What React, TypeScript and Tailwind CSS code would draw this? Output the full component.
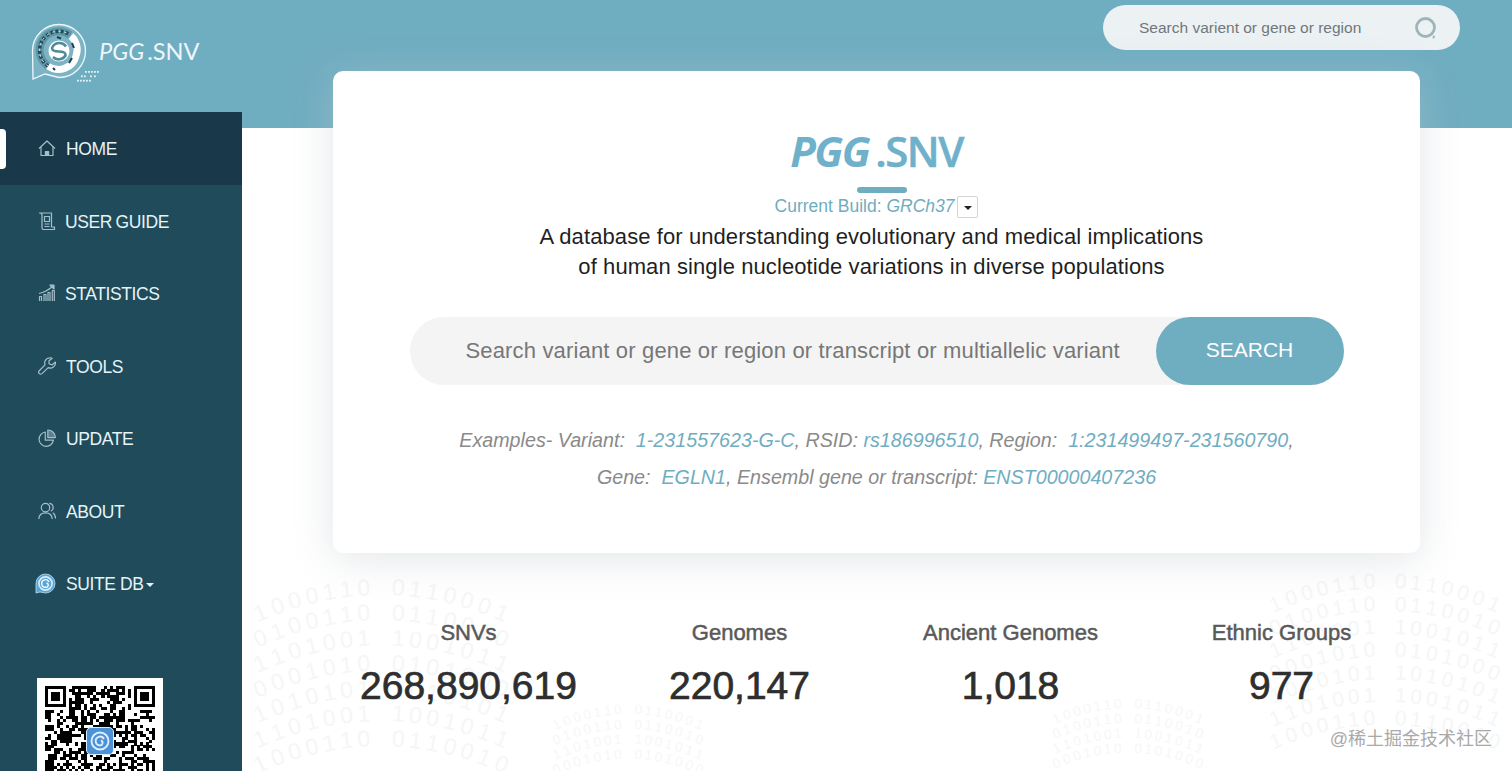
import React from "react";

const F = "font-['Liberation_Sans','Noto_Sans_CJK_SC',sans-serif]";

function Logo() {
  return (
    <svg width="60" height="60" viewBox="0 0 60 60" fill="none">
      <path d="M3 57 L2.5 29 A26.5 26.5 0 1 1 29 55.5 L15 52 Z" stroke="#eef8fb" strokeWidth="1.3" fill="#ffffff18" />
      <path d="M41 14 A18 18 0 0 1 46 34 A18 18 0 0 1 18 44" stroke="#ffffff" strokeWidth="7" />
      <path d="M18 44 A19 19 0 0 1 12 19 A19 19 0 0 1 40 13" stroke="#5f97a6" strokeWidth="8" />
      <path d="M18 44 A19 19 0 0 1 12 19 A19 19 0 0 1 40 13" stroke="#1f4b5b" strokeWidth="3.5" strokeDasharray="3 2" />
      <path d="M18 44 A19 19 0 0 1 12 19 A19 19 0 0 1 40 13" stroke="#ffffff" strokeWidth="1" strokeDasharray="2 4" />
      <circle cx="29" cy="29" r="10.5" fill="#ffffff" />
      <path d="M36 24.5 A8 8 0 0 0 22 26 Q22 29.5 29 29.5 Q36 29.5 35.5 33.5 A8 8 0 0 1 23 35" stroke="#4f8a9b" strokeWidth="2.6" />
      <path d="M27 15 L31 16.5 M42 21 L44 26 M42 36 L39 41 M23 46 L25 48" stroke="#1f3f4d" strokeWidth="2" />
    </svg>
  );
}

function SuiteIcon() {
  return (
    <svg width="21" height="21" viewBox="0 0 21 21" fill="none">
      <path d="M1 20 L1 10.5 A9.5 9.5 0 1 1 10.5 20 L5 19 Z" fill="#5aa5d6" stroke="#bfe0f2" strokeWidth="0.8" />
      <circle cx="10.5" cy="10.5" r="6.6" stroke="#d8eef9" strokeWidth="1.6" />
      <path d="M14 9 A3.8 3.8 0 1 0 10.5 14.3 A2.2 2.2 0 0 0 11.5 10" stroke="#ffffff" strokeWidth="1.4" />
    </svg>
  );
}

function BrailleDots() {
  const rows = [
    [18, 21, 24, 27, 30],
    [14, 17, 23, 27],
    [10, 13, 16, 19, 22],
  ];
  return (
    <svg width="32" height="14" viewBox="0 0 32 14" className="absolute left-[37px] top-[48px]">
      {rows.map((r, y) => r.map((x) => <rect key={`${x}-${y}`} x={x} y={1 + y * 4.4} width="1.8" height="1.8" fill="#e5f2f6" />))}
    </svg>
  );
}

const icons: Record<string, React.ReactNode> = {
  home: (
    <>
      <path d="M1 9.5 L9 2 L17 9.5" />
      <path d="M3 8 V16.5 H15 V8" />
      <rect x="7.4" y="12.5" width="3.2" height="4" fill="currentColor" />
    </>
  ),
  guide: (
    <>
      <path d="M1.5 1 H13.5 V15 H16.5 V17.5 H5.5 Q4 17.5 4 15.5 V3 Q4 1 1.5 1 Z" />
      <path d="M6.5 4.5 H11.5 V9.5 H6.5 Z M6.5 12 H11.5 M6.5 14.5 H11.5" />
    </>
  ),
  stats: (
    <>
      <path d="M1 9.5 Q8 8 14.5 2.5" />
      <path d="M12 1.2 H16 V5 Z" fill="currentColor" />
      <path d="M1.5 17 V12.5 H3.5 V17 M6 17 V10.5 H8 V17 M10 17 V8.5 H12 V17 M14.3 17 V6.5 H16.3 V17" />
    </>
  ),
  tools: (
    <path d="M11.5 0.8 A5.2 5.2 0 0 0 7 7.8 L1 14 Q0 15.5 1.3 16.6 Q2.6 17.7 4 16.6 L10.2 10.6 A5.2 5.2 0 0 0 17.4 5 L14 8 L11 6.6 L11 3.8 L14.2 1.2 A5 5 0 0 0 11.5 0.8 Z" />
  ),
  update: (
    <>
      <path d="M7.3 3 A7.2 7.2 0 1 0 15.4 11.2 H7.3 Z" />
      <path d="M9.8 1 A7.6 7.6 0 0 1 17.4 8.6 H9.8 Z" fill="currentColor" fillOpacity="0.45" />
    </>
  ),
  about: (
    <>
      <circle cx="7.5" cy="5.6" r="4.2" />
      <path d="M0.8 17 Q1 10.8 7.5 10.8 Q14 10.8 14.2 17" />
      <path d="M11.3 1.3 A4.2 4.2 0 0 1 12.7 9.3 M14.8 10.8 Q17.5 12.5 17.6 16.5" />
    </>
  ),
};

function NavItem({ icon, label, active, textGap = "ml-[10px]" }: { icon: string; label: string; active?: boolean; textGap?: string }) {
  return (
    <div className={`relative flex h-[72.5px] shrink-0 items-center pl-[38px] text-[#e6f3f7] ${active ? "bg-[#19394a]" : ""}`}>
      {active && <span className="absolute left-0 top-[17px] h-[40px] w-[6px] rounded-r-[4px] bg-white" />}
      <svg width="18" height="18" viewBox="0 0 18 18" fill="none" stroke="#a5bfc9" strokeWidth="1.2" strokeLinejoin="round" className="text-[#a5bfc9]">
        {icons[icon]}
      </svg>
      <span className={`${textGap} mt-[2px] text-[17.5px] tracking-[-0.4px] [word-spacing:-1px]`}>{label}</span>
    </div>
  );
}

function QR() {
  const n = 37;
  const cells: React.ReactNode[] = [];
  let seed = 12345;
  const rand = () => {
    seed = (seed * 1103515245 + 12345) & 0x7fffffff;
    return (seed >> 12) % 100;
  };
  const inFinder = (x: number, y: number) => (x < 8 && y < 8) || (x >= n - 8 && y < 8) || (x < 8 && y >= n - 8);
  for (let y = 0; y < n; y++) {
    for (let x = 0; x < n; x++) {
      if (!inFinder(x, y) && rand() < 52) cells.push(<rect key={`${x}-${y}`} x={x} y={y} width="1.02" height="1.02" fill="#000" />);
    }
  }
  const finder = (fx: number, fy: number) => (
    <g key={`${fx}-${fy}`}>
      <rect x={fx + 0.5} y={fy + 0.5} width="6" height="6" fill="none" stroke="#000" />
      <rect x={fx + 2} y={fy + 2} width="3" height="3" fill="#000" />
    </g>
  );
  return (
    <div className="relative mx-[37px] mt-[58.5px] h-[126px] w-[126px] shrink-0 bg-white p-[8px]">
      <svg width="110" height="110" viewBox="0 0 37 37" shapeRendering="crispEdges">
        {cells}
        {finder(0, 0)}
        {finder(30, 0)}
        {finder(0, 30)}
      </svg>
      <div className="absolute left-[49px] top-[49px] flex h-[28px] w-[28px] items-center justify-center rounded-[5px] border border-[#dbeeff] bg-[#4d92d6]">
        <svg width="22" height="22" viewBox="0 0 22 22" fill="none" stroke="#dff1ff" strokeWidth="1.8">
          <circle cx="11" cy="11" r="8.5" />
          <path d="M15 9 A4.4 4.4 0 1 0 11 15.4 A2.6 2.6 0 0 0 12 10.4" />
        </svg>
      </div>
    </div>
  );
}

const binaryRows = ["1000110 0110001", "0100110 0110010", "1101001 1001011", "0001010 0101000", "1010101 1010101", "1101001 1001011", "1000110 0110010"];

function BinaryArc({ cx, top, scale, fill, rows }: { cx: number; top: number; scale: number; fill: string; rows: number }) {
  const step = 16 * scale;
  const rowPitch = 24 * scale;
  const k = 0.0019 / scale;
  const nodes: React.ReactNode[] = [];
  binaryRows.slice(0, rows).forEach((row, r) => {
    row.split("").forEach((ch, i) => {
      if (ch === " ") return;
      const dx = (i - 7) * step;
      const y = top + r * rowPitch + k * dx * dx;
      const angle = (Math.atan(2 * k * dx) * 180) / Math.PI;
      nodes.push(
        <text key={`${r}-${i}`} x={cx + dx} y={y} fontSize={22 * scale} textAnchor="middle" fill={fill} transform={`rotate(${angle} ${cx + dx} ${y})`}>
          {ch}
        </text>
      );
    });
  });
  return <g>{nodes}</g>;
}

function Stat({ label, value }: { label: string; value: string }) {
  return (
    <div className="flex flex-col items-center">
      <div className="text-[22px] leading-[24px] text-[#595959] [-webkit-text-stroke:0.5px_#595959]">{label}</div>
      <div className="mt-[18px] text-[39px] leading-[46px] text-[#2e2e2e] [-webkit-text-stroke:0.7px_#2e2e2e]">{value}</div>
    </div>
  );
}

export default function App() {
  return (
    <div className={`relative flex h-[771px] w-full flex-col overflow-hidden bg-white ${F}`}>
      <svg aria-hidden="true" width="1512" height="771" className="pointer-events-none absolute left-0 top-0 font-['Liberation_Sans',sans-serif]">
        <BinaryArc cx={381} top={595} scale={1.05} fill="#f5f6f6" rows={7} />
        <BinaryArc cx={1385} top={588} scale={0.95} fill="#f5f6f6" rows={7} />
        <BinaryArc cx={628} top={714} scale={0.62} fill="#f6f7f7" rows={4} />
        <BinaryArc cx={1128} top={708} scale={0.62} fill="#f6f7f7" rows={4} />
      </svg>

      <header className="relative flex h-[128px] shrink-0 items-start justify-between bg-[#6fadc1]">
        <div className="relative ml-[30px] mt-[22px] flex items-center">
          <Logo />
          <BrailleDots />
          <span className="ml-[9px] font-['Lato',sans-serif] text-[23.5px] tracking-[0px] text-[#eef7fa]">
            <span className="italic">PGG</span>
            <span className="ml-[3px]">.SNV</span>
          </span>
        </div>
        <div className="mr-[52px] mt-[5px] flex h-[45px] w-[357px] items-center justify-between rounded-full bg-[#ecf1f3] pl-[36px] pr-[22px]">
          <span className="text-[15.5px] text-[#70787c]">Search varient or gene or region</span>
          <svg width="24" height="24" viewBox="0 0 24 24" fill="none" stroke="#9db5ba" strokeWidth="2.8">
            <circle cx="11.5" cy="11.5" r="9" />
            <path d="M19 20.5 L20.5 21.5" />
          </svg>
        </div>
      </header>

      <div className="flex min-h-0 flex-1">
        <aside className="z-10 -mt-[16px] flex h-[659px] w-[242px] shrink-0 flex-col bg-[#1f4b5b]">
          <NavItem icon="home" label="HOME" active />
          <NavItem icon="guide" label="USER GUIDE" textGap="ml-[9px]" />
          <NavItem icon="stats" label="STATISTICS" textGap="ml-[9px]" />
          <NavItem icon="tools" label="TOOLS" />
          <NavItem icon="update" label="UPDATE" />
          <NavItem icon="about" label="ABOUT" />
          <div className="flex h-[72.5px] shrink-0 items-center pl-[35px] text-[#e6f3f7]">
            <SuiteIcon />
            <span className="ml-[10px] mt-[2px] text-[17.5px] tracking-[-0.4px]">SUITE DB</span>
            <span className="ml-[2px] mt-[4px] h-0 w-0 border-x-[4px] border-t-[4px] border-x-transparent border-t-[#e6f3f7]" />
          </div>
          <QR />
        </aside>

        <main className="relative min-w-0 flex-1">
          <div className="relative z-10 mx-[91px] -mt-[57px] flex h-[482px] w-[1087px] flex-col items-center rounded-[10px] bg-white shadow-[0_6px_40px_rgba(190,200,205,0.45)]">
            <div className="mt-[54px] font-['Open_Sans',sans-serif] text-[42px] font-semibold leading-[52px] tracking-[-1.5px] text-[#6fb0ca]">
              <span className="font-bold italic">PGG</span>
              <span className="ml-[6px] [-webkit-text-stroke:0.5px_#6fb0ca]">.SNV</span>
            </div>
            <span className="ml-[10px] mt-[10px] h-[6px] w-[50px] rounded-full bg-[#6fadc1]" />
            <div className="mt-[0px] flex items-center text-[17.5px] leading-[24px] text-[#6fadc1]">
              <span>Current Build:&nbsp;</span>
              <span className="italic">GRCh37</span>
              <span className="ml-[3px] mt-[3px] flex h-[22px] w-[21px] items-center justify-center rounded-[2px] border border-[#d5d5d5] bg-white">
                <span className="mt-[2px] h-0 w-0 border-x-[4px] border-t-[4px] border-x-transparent border-t-[#222]" />
              </span>
            </div>
            <p className="mr-[10px] mt-[4px] text-center text-[22px] leading-[30px] tracking-[0.09px] text-[#1f1f1f]">
              A database for understanding evolutionary and medical implications
              <br />
              of human single nucleotide variations in diverse populations
            </p>
            <div className="mt-[35px] flex h-[68px] w-[934px] items-center justify-between rounded-full bg-[#f4f4f4]">
              <span className="mb-[2px] pl-[56px] text-[22px] tracking-[0.16px] text-[#777]">Search variant or gene or region or transcript or multiallelic variant</span>
              <span className="flex h-[68px] w-[188px] items-center justify-center rounded-full bg-[#6fadc1] pb-[2px] text-[21px] text-white">SEARCH</span>
            </div>
            <div className="mt-[37px] flex flex-col items-center text-[19.7px] italic leading-[37px] text-[#8a8a8a]">
              <div>
                Examples- Variant: &nbsp;<span className="text-[#6fadc1]">1-231557623-G-C</span>, RSID: <span className="text-[#6fadc1]">rs186996510</span>, Region: &nbsp;
                <span className="text-[#6fadc1]">1:231499497-231560790</span>,
              </div>
              <div>
                Gene: &nbsp;<span className="text-[#6fadc1]">EGLN1</span>, Ensembl gene or transcript: <span className="text-[#6fadc1]">ENST00000407236</span>
              </div>
            </div>
          </div>

          <div className="relative z-10 ml-[91px] mt-[68px] grid w-[1084px] grid-cols-4">
            <Stat label="SNVs" value="268,890,619" />
            <Stat label="Genomes" value="220,147" />
            <Stat label="Ancient Genomes" value="1,018" />
            <Stat label="Ethnic Groups" value="977" />
          </div>
        </main>
      </div>

      <div className="absolute bottom-[20px] right-[20px] z-20 text-[18px] leading-[24px] text-[#a9a9a9]">@稀土掘金技术社区</div>
    </div>
  );
}
